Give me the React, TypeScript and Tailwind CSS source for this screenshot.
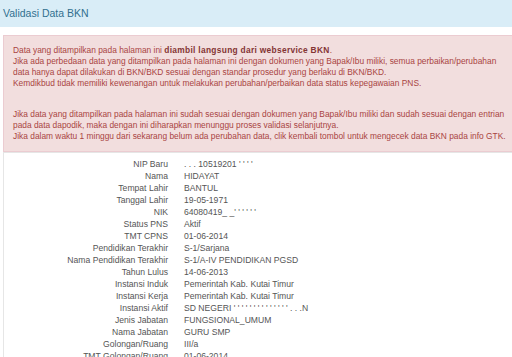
import React from "react";

const rows: [string, string][] = [
  ["NIP Baru", ". . . 10519201 ' ' ' '"],
  ["Nama", "HIDAYAT"],
  ["Tempat Lahir", "BANTUL"],
  ["Tanggal Lahir", "19-05-1971"],
  ["NIK", "64080419_ _' ' ' ' ' '"],
  ["Status PNS", "Aktif"],
  ["TMT CPNS", "01-06-2014"],
  ["Pendidikan Terakhir", "S-1/Sarjana"],
  ["Nama Pendidikan Terakhir", "S-1/A-IV PENDIDIKAN PGSD"],
  ["Tahun Lulus", "14-06-2013"],
  ["Instansi Induk", "Pemerintah Kab. Kutai Timur"],
  ["Instansi Kerja", "Pemerintah Kab. Kutai Timur"],
  ["Instansi Aktif", "SD NEGERI ' ' ' ' ' ' ' ' ' ' ' '  ' '  . . .N"],
  ["Jenis Jabatan", "FUNGSIONAL_UMUM"],
  ["Nama Jabatan", "GURU SMP"],
  ["Golongan/Ruang", "III/a"],
  ["TMT Golongan/Ruang", "01-06-2014"],
];

export default function App() {
  return (
    <div
      className="w-[512px] h-[357px] overflow-hidden bg-white"
      style={{ fontFamily: '"Liberation Sans", Arial, sans-serif' }}
    >
      <div className="h-[27px] bg-[#d9edf7] flex items-center pl-[3px] text-[10.5px] text-[#31708f]">
        Validasi Data BKN
      </div>
      <div className="h-[8px]" />
      <div className="ml-[3px] bg-[#f2dede] border border-r-0 border-[#ebccd1] pl-[9px] pt-[9px] pb-[9px] text-[8.4px] leading-[11px] text-[#a94442] whitespace-nowrap">
        <p>
          Data yang ditampilkan pada halaman ini{" "}
          <b className="text-[#843534] tracking-[0.3px]">diambil langsung dari webservice BKN</b>.
          <br />
          Jika ada perbedaan data yang ditampilkan pada halaman ini dengan dokumen yang Bapak/Ibu miliki, semua perbaikan/perubahan
          <br />
          data hanya dapat dilakukan di BKN/BKD sesuai dengan standar prosedur yang berlaku di BKN/BKD.
          <br />
          Kemdikbud tidak memiliki kewenangan untuk melakukan perubahan/perbaikan data status kepegawaian PNS.
        </p>
        <p className="mt-[20px]">
          Jika data yang ditampilkan pada halaman ini sudah sesuai dengan dokumen yang Bapak/Ibu miliki dan sudah sesuai dengan entrian
          <br />
          pada data dapodik, maka dengan ini diharapkan menunggu proses validasi selanjutnya.
          <br />
          Jika dalam waktu 1 minggu dari sekarang belum ada perubahan data, clik kembali tombol untuk mengecek data BKN pada info GTK.
        </p>
      </div>
      <div className="ml-[3px] border-l border-t border-[#e6e6e6] pt-[5px] h-[220px]">
        <div className="grid grid-cols-[164px_1fr] gap-x-[16px] text-[8.6px] leading-[12px] text-[#555]">
          {rows.map(([k, v]) => (
            <React.Fragment key={k}>
              <div className="text-right whitespace-nowrap">{k}</div>
              <div className="whitespace-nowrap">{v}</div>
            </React.Fragment>
          ))}
        </div>
      </div>
    </div>
  );
}
